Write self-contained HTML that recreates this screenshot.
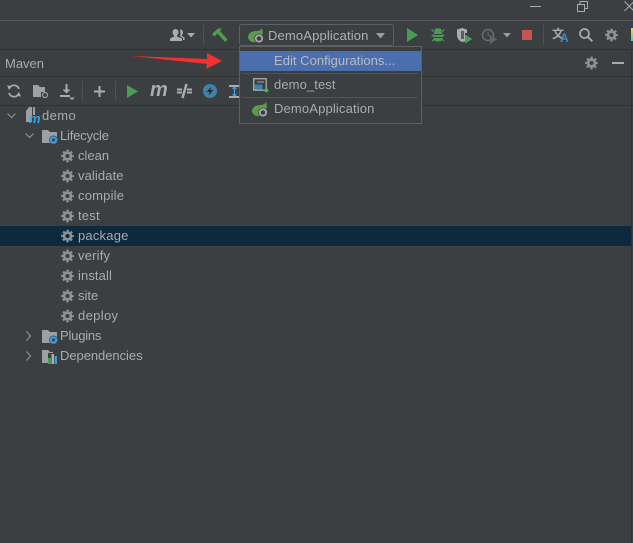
<!DOCTYPE html>
<html><head><meta charset="utf-8">
<style>
html,body{margin:0;padding:0;background:#3c3f41}
#p{position:relative;width:633px;height:543px;overflow:hidden;background:#3c3f41;font-family:"Liberation Sans",sans-serif;font-size:13px;color:#a9abad}
.t{position:absolute;white-space:nowrap;line-height:16px;height:16px}
.l{position:absolute;background:#323232}
svg{position:absolute;overflow:visible}
</style></head><body><div id="p">
<svg width="0" height="0" style="position:absolute"><defs>
<g id="gear"><circle cx="6.500" cy="7" r="3.400" fill="none" stroke="#8f9294" stroke-width="2.700"/><circle cx="6.500" cy="7" r="5.400" fill="none" stroke="#8f9294" stroke-width="1.900" stroke-dasharray="2.300 1.940" stroke-dashoffset="1.150"/></g>
<g id="spring"><path fill="#5b9a4a" d="M0 9.500C0 5 4 3 8 3c3 0 5-1 6-3 1 3 1 6 0 8l-6 6c-4 1-7-1-8-4.500z"/><circle cx="11" cy="10.500" r="4.800" fill="#3c3f41"/><circle cx="11" cy="10.500" r="3.200" fill="none" stroke="#a8abad" stroke-width="1.800"/></g>
<g id="folder"><path fill="#9ba0a5" d="M0 1h6l2 2h7v11H0z"/></g>
</defs></svg>

<div class="l" style="left:0;top:20px;width:633px;height:1px;background:#55585a"></div>
<div class="l" style="left:0;top:49px;width:633px;height:1px"></div>
<div class="l" style="left:0;top:76px;width:633px;height:1px"></div>
<div class="l" style="left:0;top:105px;width:633px;height:1px"></div>
<div class="l" style="left:631px;top:50px;width:1px;height:493px"></div>

<!-- window controls -->
<div class="l" style="left:530px;top:6px;width:11px;height:1px;background:#a9abad"></div>
<svg style="left:577px;top:1px" width="11" height="11"><path d="M.5 3.500h7v7h-7zM3 3.500V.5h7.500v7H7.500" fill="none" stroke="#a9abad"/></svg>
<svg style="left:624px;top:1px" width="9" height="11"><path d="M.5.5l9.500 9.500M.5 10L10 .5" fill="none" stroke="#a9abad"/></svg>

<!-- toolbar left -->
<svg style="left:170px;top:28px" width="26" height="14"><path fill="#a9abad" d="M5.500 1a3 3 0 0 1 3 3c0 2-1 3-1.500 3.500v1L12 10.500v2.500H0v-2.500l4-2v-1C3 6.500 2.500 5.500 2.500 4a3 3 0 0 1 3-3z"/><path fill="#a9abad" d="M10 1.500c2 0 3 1.200 3 2.800 0 1.500-.7 2.500-1.200 3v.7l2.700 1.500V12H13v-2l-3-1.500.5-2.500z"/><path fill="#a9abad" d="M17 5h8l-4 4.500z"/></svg>
<div class="l" style="left:203px;top:25px;width:1px;height:20px;background:#4e5153"></div>
<svg style="left:212px;top:28px" width="16" height="15"><path fill="#4f9b52" d="M0 6L6 .5h4L8 3l7.500 8.500L13 14 5.500 5.500l-3 3z"/></svg>

<!-- run config combo -->
<div style="position:absolute;left:239px;top:24px;width:153px;height:20px;border:1px solid #5e6163;border-radius:3px"></div>
<svg style="left:248px;top:28px" width="16" height="16"><use href="#spring"/></svg>
<div class="t" style="left:268px;top:28px;letter-spacing:.15px;color:#afb1b3">DemoApplication</div>
<svg style="left:376px;top:33px" width="9" height="6"><path fill="#9a9da0" d="M0 0h9L4.500 5.500z"/></svg>

<!-- right toolbar -->
<svg style="left:407px;top:28px" width="12" height="14"><path fill="#499c54" d="M0 0l11 7-11 7z"/></svg>
<svg style="left:431px;top:27px" width="14" height="15"><path fill="#499c54" d="M4.500 1.500h5L11 4.500H3z"/><rect x="2.500" y="4" width="9" height="10.500" rx="3.500" fill="#499c54"/><path d="M.5 2.500l2.500 2M13.500 2.500L11 4.500M.5 8.500H3M13.500 8.500H11M1 14l2.500-2M13 14l-2.500-2" stroke="#499c54" stroke-width="1.300"/><path d="M3 7.500h8M3 10.500h8" stroke="#3c3f41"/></svg>
<svg style="left:457px;top:28px" width="17" height="16"><path fill="#a9abad" d="M0 1.500L5 0l5 1.500V5H8v8.500L5 14C2 13 0 10 0 7z"/><path fill="#3c3f41" d="M4 3h3v8H4z" opacity=".7"/><path fill="#499c54" d="M8 6.500l7.500 4.500L8 15.500z"/></svg>
<svg style="left:481px;top:28px" width="17" height="16"><circle cx="7" cy="7" r="5.500" fill="none" stroke="#6b6e70" stroke-width="1.500"/><path d="M7 3.500V7l2.500 1.500" fill="none" stroke="#6b6e70"/><path fill="#626567" d="M9 7l7 4.500L9 16z"/></svg>
<svg style="left:503px;top:33px" width="8" height="5"><path fill="#9a9da0" d="M0 0h8L4 4.500z"/></svg>
<div style="position:absolute;left:522px;top:30px;width:10px;height:10px;background:#c75450"></div>
<div class="l" style="left:543px;top:25px;width:1px;height:20px;background:#4e5153"></div>
<div class="t" style="left:552px;top:27px;font-family:'Noto Sans CJK SC',sans-serif;font-size:12px;font-weight:bold;color:#a9abad;line-height:14px">文</div>
<div class="t" style="left:560px;top:33px;font-size:12px;font-weight:bold;color:#3592c4;line-height:10px;height:10px">A</div>
<svg style="left:579px;top:28px" width="14" height="14"><circle cx="5.500" cy="5.500" r="4.500" fill="none" stroke="#a9abad" stroke-width="1.700"/><path d="M8.800 8.800l4.500 4.500" stroke="#a9abad" stroke-width="2"/></svg>
<svg style="left:605px;top:28px" width="14" height="14"><use href="#gear"/></svg>
<div style="position:absolute;left:631px;top:28px;width:2px;height:13px;background:linear-gradient(#e8d85a,#5fc4a0)"></div>

<!-- Maven header -->
<div class="t" style="left:5px;top:56px">Maven</div>
<svg style="left:585px;top:56px" width="14" height="14"><use href="#gear"/></svg>
<div class="l" style="left:612px;top:62px;width:12px;height:2px;background:#a9abad"></div>

<!-- Arrow -->
<svg style="left:0;top:0" width="633" height="80"><path fill="#f5312f" d="M131 56L207 59 207 53 222 61 206 69 207 64z"/></svg>

<!-- Maven toolbar -->
<svg style="left:7px;top:84px" width="14" height="14"><path d="M12 5A5.200 5.200 0 0 0 2.500 4M2 9a5.200 5.200 0 0 0 9.500 1" fill="none" stroke="#a9abad" stroke-width="1.700"/><path fill="#a9abad" d="M0 1.500l5 .5-3 4zM14 12.500l-5-.5 3-4z"/></svg>
<svg style="left:33px;top:84px" width="16" height="15"><path fill="#9ba0a5" d="M0 1h5l2 2h5v5H8v5H0z"/><circle cx="12" cy="11" r="2.500" fill="none" stroke="#9ba0a5" stroke-width="1.200"/></svg>
<svg style="left:60px;top:84px" width="15" height="16"><path d="M6.500 0v7" stroke="#a9abad" stroke-width="2"/><path fill="#a9abad" d="M2.500 5.500h8L6.500 9.500zM0 11h10v2H0z"/><path fill="#a9abad" d="M9 13.500h6L12 16z"/></svg>
<div class="l" style="left:82px;top:81px;width:1px;height:20px;background:#4e5153"></div>
<svg style="left:94px;top:86px" width="11" height="11"><path d="M5.500 0v11M0 5.500h11" stroke="#a9abad" stroke-width="2"/></svg>
<div class="l" style="left:115px;top:81px;width:1px;height:20px;background:#4e5153"></div>
<svg style="left:127px;top:85px" width="12" height="13"><path fill="#499c54" d="M0 0l11 6.500L0 13z"/></svg>
<div class="t" style="left:150px;top:82px;font-weight:bold;font-style:italic;font-size:20px;color:#a9abad;line-height:17px;height:17px">m</div>
<svg style="left:177px;top:84px" width="16" height="14"><path d="M0 5.500h5M0 8.500h5M10 5.500h5M10 8.500h5" stroke="#a9abad" stroke-width="2"/><path d="M9.500 0L5.500 14" stroke="#a9abad" stroke-width="2.500"/></svg>
<svg style="left:203px;top:84px" width="14" height="14"><circle cx="7" cy="7" r="7" fill="#3a85a8"/><path fill="#2b2d2f" d="M8.500 2.500L3.500 8h3L5.500 11.500l5-5.500h-3z"/></svg>
<svg style="left:229px;top:85px" width="11" height="13"><path d="M0 1h11M0 12h11" stroke="#a9abad" stroke-width="2"/><path d="M5.500 2v9M3.500 4l2-2 2 2M3.500 9l2 2 2-2" stroke="#4aa3d4" fill="none" stroke-width="1.200"/></svg>

<!-- Tree -->
<svg style="left:7px;top:113px" width="9" height="6"><path d="M.5.5l4 4 4-4" fill="none" stroke="#8c8f91" stroke-width="1.200"/></svg>
<svg style="left:26px;top:107px" width="14" height="18"><path fill="#9ba0a5" d="M3 0h3v15H0V4zM7 0h2v8H7z"/><text x="3" y="16" font-family="Liberation Sans,sans-serif" font-style="italic" font-weight="bold" font-size="13" fill="#3ba3dd">m</text></svg>
<div class="t" style="left:42px;top:108px;letter-spacing:.4px">demo</div>

<svg style="left:25px;top:133px" width="9" height="6"><path d="M.5.500l4 4 4-4" fill="none" stroke="#8c8f91" stroke-width="1.200"/></svg>
<svg style="left:42px;top:129px" width="16" height="15"><use href="#folder"/><circle cx="11.500" cy="11" r="4.500" fill="#3c3f41"/><circle cx="11.500" cy="11" r="2.700" fill="none" stroke="#3a9bd8" stroke-width="2.400"/></svg>
<div class="t" style="left:60px;top:128px;letter-spacing:-.2px">Lifecycle</div>

<div style="position:absolute;left:0;top:226px;width:631px;height:20px;background:#0d293e"></div>

<svg style="left:61px;top:149px" width="14" height="14"><use href="#gear"/></svg><div class="t" style="left:78px;top:148px;">clean</div>
<svg style="left:61px;top:169px" width="14" height="14"><use href="#gear"/></svg><div class="t" style="left:78px;top:168px;letter-spacing:.1px">validate</div>
<svg style="left:61px;top:189px" width="14" height="14"><use href="#gear"/></svg><div class="t" style="left:78px;top:188px;letter-spacing:.2px">compile</div>
<svg style="left:61px;top:209px" width="14" height="14"><use href="#gear"/></svg><div class="t" style="left:78px;top:208px;letter-spacing:.2px">test</div>
<svg style="left:61px;top:229px" width="14" height="14"><use href="#gear"/></svg><div class="t" style="left:78px;top:228px;letter-spacing:.2px">package</div>
<svg style="left:61px;top:249px" width="14" height="14"><use href="#gear"/></svg><div class="t" style="left:78px;top:248px;letter-spacing:.2px">verify</div>
<svg style="left:61px;top:269px" width="14" height="14"><use href="#gear"/></svg><div class="t" style="left:78px;top:268px;letter-spacing:.1px">install</div>
<svg style="left:61px;top:289px" width="14" height="14"><use href="#gear"/></svg><div class="t" style="left:78px;top:288px;">site</div>
<svg style="left:61px;top:309px" width="14" height="14"><use href="#gear"/></svg><div class="t" style="left:78px;top:308px;letter-spacing:.35px">deploy</div>

<svg style="left:26px;top:331px" width="6" height="10"><path d="M.5.500l4 4.500-4 4.500" fill="none" stroke="#8c8f91" stroke-width="1.200"/></svg>
<svg style="left:42px;top:329px" width="16" height="15"><use href="#folder"/><circle cx="11.500" cy="11" r="4.500" fill="#3c3f41"/><circle cx="11.500" cy="11" r="2.700" fill="none" stroke="#3a9bd8" stroke-width="2.400"/></svg>
<div class="t" style="left:60px;top:328px;letter-spacing:-.2px">Plugins</div>

<svg style="left:26px;top:351px" width="6" height="10"><path d="M.5.500l4 4.500-4 4.500" fill="none" stroke="#8c8f91" stroke-width="1.200"/></svg>
<svg style="left:42px;top:349px" width="16" height="15"><path fill="#9ba0a5" d="M0 1h6l2 2h3v1H6v10H0z"/><rect x="6" y="9" width="3" height="6" fill="#499c54"/><rect x="9.500" y="5" width="2.500" height="10" fill="#a9abad"/><rect x="12.500" y="7" width="2.500" height="8" fill="#3a9bd8"/></svg>
<div class="t" style="left:60px;top:348px;letter-spacing:-.05px">Dependencies</div>

<!-- Popup -->
<div style="position:absolute;left:239px;top:46px;width:181px;height:76px;border:1px solid #5e6163;background:#3c3f41"></div>
<div style="position:absolute;left:240px;top:51px;width:181px;height:20px;background:#4b6eaf"></div>
<div class="t" style="left:274px;top:53px;letter-spacing:.03px;color:#b9bbbd">Edit Configurations...</div>
<div class="l" style="left:243px;top:73px;width:175px;height:1px;background:#515456"></div>
<svg style="left:253px;top:78px" width="16" height="15"><rect x=".7" y=".7" width="12.500" height="11.500" fill="none" stroke="#a9abad" stroke-width="1.300"/><rect x="1.500" y="6.500" width="8" height="5" fill="#3a85a8"/><path d="M4 4h7" stroke="#a9abad"/><circle cx="13.500" cy="12.500" r="1.800" fill="#1fd13a"/></svg>
<div class="t" style="left:274px;top:77px;letter-spacing:.1px">demo_test</div>
<div class="l" style="left:243px;top:97px;width:175px;height:1px;background:#515456"></div>
<svg style="left:252px;top:102px" width="16" height="16"><use href="#spring"/></svg>
<div class="t" style="left:274px;top:101px;letter-spacing:.15px">DemoApplication</div>
</div></body></html>
